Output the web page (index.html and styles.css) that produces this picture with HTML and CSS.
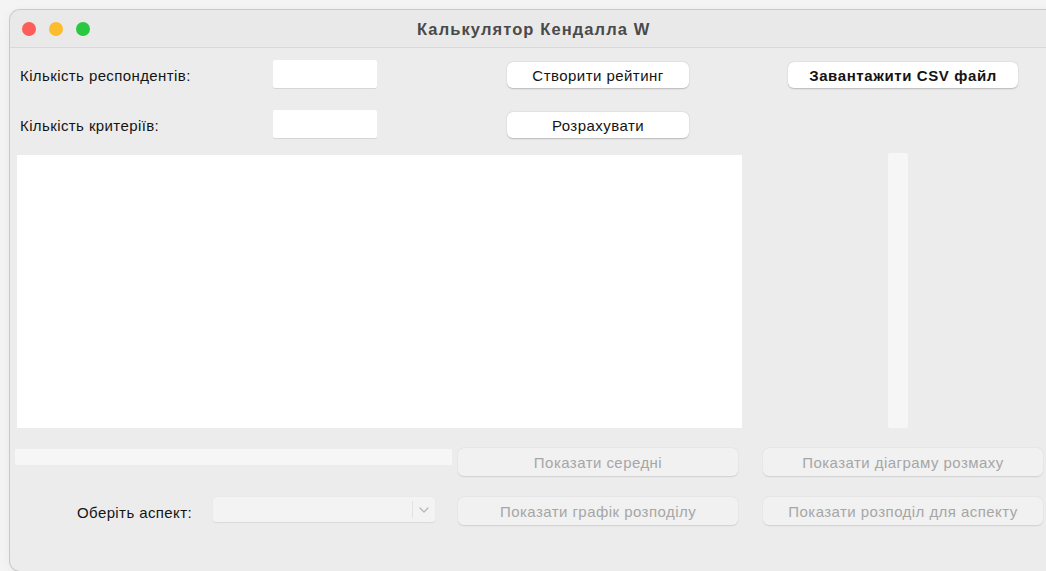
FILE: index.html
```html
<!DOCTYPE html>
<html lang="uk">
<head>
<meta charset="utf-8">
<title>Калькулятор Кендалла W</title>
<link rel="stylesheet" href="styles.css">
</head>
<body>
<div class="window">
  <div class="titlebar">
    <div class="lights">
      <span class="light red"></span>
      <span class="light yellow"></span>
      <span class="light green"></span>
    </div>
    <div class="title">Калькулятор Кендалла W</div>
  </div>
  <div class="content">
    <div class="field">
      <label class="label">Кількість респондентів:</label>
      <input class="entry" type="text">
    </div>
    <div class="cell"><button class="btn">Створити рейтинг</button></div>
    <div class="cell"><button class="btn btn-bold">Завантажити CSV файл</button></div>

    <div class="field">
      <label class="label">Кількість критеріїв:</label>
      <input class="entry" type="text">
    </div>
    <div class="cell"><button class="btn">Розрахувати</button></div>
    <div></div>

    <div class="output"></div>
    <div class="side"><div class="scrollbar"></div></div>

    <div class="progress"></div>
    <button class="btn btn-wide" disabled>Показати середні</button>
    <button class="btn btn-wide" disabled>Показати діаграму розмаху</button>

    <div class="aspect">
      <span class="aspect-label">Оберіть аспект:</span>
      <div class="select">
        <span class="select-arrow">
          <svg width="10" height="6" viewBox="0 0 10 6"><path d="M1 1l4 4 4-4" fill="none" stroke="#b5b5b5" stroke-width="1.2" stroke-linecap="round" stroke-linejoin="round"/></svg>
        </span>
      </div>
    </div>
    <button class="btn btn-wide" disabled>Показати графік розподілу</button>
    <button class="btn btn-wide" disabled>Показати розподіл для аспекту</button>
  </div>
</div>
</body>
</html>
```

FILE: styles.css
```css
html, body {
  margin: 0;
  height: 100%;
}

body {
  background: #f4f4f4;
  padding: 10px 0 0 10px;
  box-sizing: border-box;
  overflow: hidden;
  font-family: "Liberation Sans", Arial, sans-serif;
  color: #141414;
}

.window {
  width: 1060px;
  height: 561px;
  background: #ececec;
  border-radius: 10px;
  box-shadow: 0 0 0 1px #c9c9c9, 0 2px 12px rgba(0, 0, 0, 0.06);
  overflow: hidden;
}

.titlebar {
  height: 37px;
  border-bottom: 1px solid #d9d9d9;
  background: #e9e9e9;
  display: flex;
  align-items: center;
  position: relative;
}

.lights {
  display: flex;
  gap: 13px;
  padding-left: 12px;
}

.light {
  width: 14px;
  height: 14px;
  border-radius: 50%;
}

.red { background: #fc5f57; }
.yellow { background: #fdbc2e; }
.green { background: #28c840; }

.title {
  position: absolute;
  left: 407px;
  top: 0;
  line-height: 38px;
  font-weight: bold;
  font-size: 16.5px;
  letter-spacing: 1.1px;
  color: #4a4a4a;
}

/* rows: top controls, second controls, output, bottom buttons (x2) */
.content {
  display: grid;
  grid-template-columns: 418px 280px 280px;
  grid-template-rows: 28px 50px 290px 48px 49px;
  column-gap: 25px;
  align-items: end;
  padding: 12px 0 0 5px;
}

.field {
  height: 28px;
  display: flex;
  align-items: center;
  padding-left: 5px;
}

.label {
  width: 253px;
  flex: none;
  padding-top: 2px;
  font-size: 15px;
  letter-spacing: 0.4px;
}

.entry {
  width: 104px;
  height: 28px;
  flex: none;
  box-sizing: border-box;
  border: none;
  border-radius: 2px;
  background: #ffffff;
  box-shadow: 0 1px 0 rgba(0, 0, 0, 0.09);
  padding: 0 4px;
}

.cell {
  height: 28px;
  display: flex;
  justify-content: center;
  align-items: flex-end;
}

.btn {
  height: 26px;
  border: none;
  border-radius: 6px;
  background: #ffffff;
  box-shadow: 0 0.5px 1.5px rgba(0, 0, 0, 0.22);
  font-family: "Liberation Sans", Arial, sans-serif;
  font-size: 15px;
  letter-spacing: 0.45px;
  color: #141414;
  padding: 0;
}

.cell .btn { width: 182px; }
.cell .btn-bold { width: 230px; font-weight: bold; letter-spacing: 0.6px; }

.btn-wide {
  width: 280px;
  height: 28px;
  background: #f1f1f1;
  color: #a6a6a6;
  box-shadow: 0 0.5px 1.5px rgba(0, 0, 0, 0.12);
}

.output {
  grid-column: 1 / span 2;
  height: 273px;
  background: #ffffff;
  margin: 0 -4px 0 2px;
}

.side {
  display: flex;
  padding-left: 125px;
}

.scrollbar {
  width: 20px;
  height: 275px;
  background: #f6f6f6;
  border-radius: 2px;
}

.progress {
  align-self: start;
  height: 16px;
  margin: 21px -19px 0 0;
  background: #f6f6f6;
  border-radius: 1px;
}

.aspect {
  height: 28px;
  display: flex;
  align-items: center;
}

.aspect-label {
  width: 198px;
  flex: none;
  box-sizing: border-box;
  padding: 2px 0 0 62px;
  font-size: 15px;
  letter-spacing: 0.4px;
}

.select {
  width: 222px;
  flex: none;
  height: 25px;
  margin-top: -3px;
  background: #f3f3f3;
  border-radius: 3px;
  box-shadow: 0 0.5px 1px rgba(0, 0, 0, 0.08);
  display: flex;
  justify-content: flex-end;
  align-items: center;
}

.select-arrow {
  width: 22px;
  height: 17px;
  border-left: 1px solid #e2e2e2;
  display: flex;
  justify-content: center;
  align-items: center;
}
```
